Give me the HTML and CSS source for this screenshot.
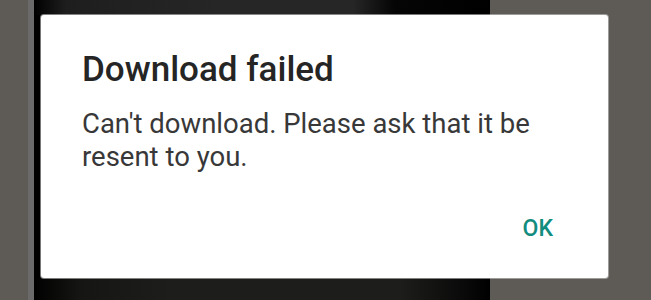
FILE: index.html
```html
<!DOCTYPE html>
<html>
<head>
<meta charset="utf-8">
<link rel="stylesheet" href="styles.css">
</head>
<body>
<div class="scene">
  <div class="wall"></div>
  <div class="bezel"></div>
  <div class="phone">
    <div class="phone-top"></div>
    <div class="phone-mid"></div>
    <div class="phone-bottom"></div>
  </div>
  <div class="wall wall-right"></div>
  <div class="dialog">
    <h1 class="dialog-title">Download failed</h1>
    <p class="dialog-body">Can't download. Please ask that it be resent to you.</p>
    <div class="dialog-actions">
      <span class="dialog-btn">OK</span>
    </div>
  </div>
</div>
</body>
</html>
```

FILE: styles.css
```css
html, body {
  margin: 0;
  padding: 0;
  width: 651px;
  height: 300px;
  overflow: hidden;
  background: #5d5a56;
}
.scene {
  position: relative;
  display: flex;
  width: 651px;
  height: 300px;
  font-family: Roboto, "Noto Sans", sans-serif;
}
.wall {
  width: 28px;
  background: #5e5b57;
}
.wall-right {
  flex: 1;
  background: #5e5b57;
}
.bezel {
  width: 6px;
  background: #6b6a6a;
}
.phone {
  width: 456px;
  display: flex;
  flex-direction: column;
  background: #000;
}
.phone-top {
  height: 15px;
  background: linear-gradient(90deg, #000 0%, #1e1e1e 7%, #262626 40%, #262626 70%, #050505 79%, #000 100%);
}
.phone-mid {
  flex: 1;
  background: #000;
}
.phone-bottom {
  height: 22px;
  background: linear-gradient(90deg, #000 0%, #151613 10%, #1d1e1b 30%, #1d1e1b 80%, #0a0a0a 94%, #000 100%);
}
.dialog {
  position: absolute;
  left: 41px;
  top: 15px;
  width: 567px;
  height: 263px;
  box-sizing: border-box;
  background: #fff;
  border-radius: 3px;
  box-shadow: 0 0 0 1px rgba(200, 200, 200, 0.6);
  padding: 35px 55px 0 41px;
}
.dialog-title {
  margin: 0;
  font-size: 35px;
  line-height: 40px;
  font-weight: 500;
  color: #252525;
}
.dialog-body {
  margin: 17px 0 0 0;
  font-size: 27.5px;
  line-height: 33px;
  font-weight: 400;
  color: #383838;
  width: 470px;
}
.dialog-actions {
  display: flex;
  justify-content: flex-end;
  margin-top: 42px;
}
.dialog-btn {
  font-size: 23px;
  line-height: 28px;
  font-weight: 500;
  color: #128c7e;
}
```
